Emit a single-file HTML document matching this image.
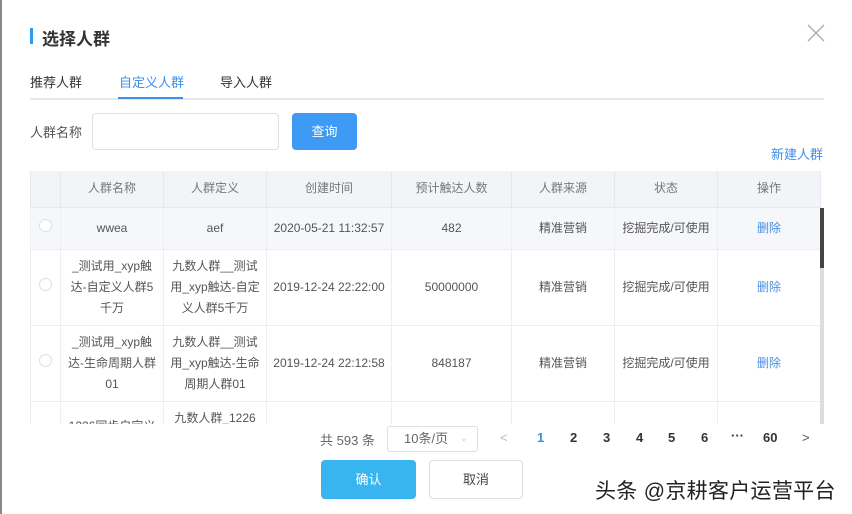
<!DOCTYPE html>
<html><head><meta charset="utf-8"><style>
*{margin:0;padding:0;box-sizing:border-box}
body{width:852px;height:514px;background:#fff;font-family:"Liberation Sans","Noto Sans CJK SC",sans-serif;position:relative;overflow:hidden;color:#333}
.a{position:absolute}
table{border-collapse:collapse;table-layout:fixed}
td{border:1px solid #ebeef5;border-top:none;text-align:center;font-size:12px;color:#555;line-height:21px;padding:0 6px}
.h td{background:#f2f4f8;color:#777;height:36px;border-color:#e6e8ee}
.r1 td{background:#f5f7fa;height:42px}
.rad{display:inline-block;width:13px;height:13px;border:1px solid #dcdfe6;border-radius:50%;background:#fff}
.del{color:#4a90e2}
</style></head><body>
<div class="a" style="left:0;top:0;width:2px;height:514px;background:#888"></div>
<div class="a" style="left:30px;top:28px;width:3px;height:16px;background:#2d9cf0"></div>
<div class="a" style="left:42px;top:25px;font-size:17px;font-weight:bold;color:#333">选择人群</div>
<svg class="a" style="left:806px;top:23px" width="20" height="20"><path d="M2 2L18 18M18 2L2 18" stroke="#aaa" stroke-width="1.3"/></svg>
<div class="a" style="left:30px;top:72px;font-size:13px;color:#333">推荐人群</div>
<div class="a" style="left:119px;top:72px;font-size:13px;color:#3d8fe8">自定义人群</div>
<div class="a" style="left:220px;top:72px;font-size:13px;color:#333">导入人群</div>
<div class="a" style="left:30px;top:98px;width:794px;height:2px;background:#e4e7ed"></div>
<div class="a" style="left:118px;top:97px;width:65px;height:2px;background:#3d8fe8"></div>
<div class="a" style="left:30px;top:122px;font-size:13px;color:#555">人群名称</div>
<div class="a" style="left:92px;top:113px;width:187px;height:37px;border:1px solid #dcdfe6;border-radius:4px"></div>
<div class="a" style="left:292px;top:113px;width:65px;height:37px;background:#3d9af5;border-radius:4px;color:#fff;font-size:13px;text-align:center;line-height:37px">查询</div>
<div class="a" style="left:771px;top:144px;font-size:13px;color:#3d8fe8">新建人群</div>
<div class="a" style="left:30px;top:171px;width:794px;height:253px;overflow:hidden">
<table style="width:790px">
<colgroup><col style="width:30px"><col style="width:103px"><col style="width:103px"><col style="width:125px"><col style="width:120px"><col style="width:103px"><col style="width:103px"><col style="width:103px"></colgroup>
<tr class="h"><td></td><td>人群名称</td><td>人群定义</td><td>创建时间</td><td>预计触达人数</td><td>人群来源</td><td>状态</td><td>操作</td></tr>
<tr class="r1"><td><span class="rad"></span></td><td>wwea</td><td>aef</td><td>2020-05-21 11:32:57</td><td>482</td><td>精准营销</td><td>挖掘完成/可使用</td><td class="del">删除</td></tr>
<tr style="height:76px"><td><span class="rad"></span></td><td>_测试用_xyp触达-自定义人群5千万</td><td>九数人群__测试用_xyp触达-自定义人群5千万</td><td>2019-12-24 22:22:00</td><td>50000000</td><td>精准营销</td><td>挖掘完成/可使用</td><td class="del">删除</td></tr>
<tr style="height:76px"><td><span class="rad"></span></td><td>_测试用_xyp触达-生命周期人群01</td><td>九数人群__测试用_xyp触达-生命周期人群01</td><td>2019-12-24 22:12:58</td><td>848187</td><td>精准营销</td><td>挖掘完成/可使用</td><td class="del">删除</td></tr>
<tr style="height:60px"><td></td><td style="vertical-align:top;padding-top:14px">1226同步自定义</td><td style="vertical-align:top;padding-top:6px">九数人群_1226</td><td></td><td></td><td></td><td></td><td></td></tr>
</table>
<div class="a" style="left:790px;top:37px;width:4px;height:216px;background:#ddd"></div>
<div class="a" style="left:790px;top:37px;width:4px;height:60px;background:#444"></div>
</div>
<div class="a" style="left:320px;top:430px;font-size:13px;color:#666">共 593 条</div>
<div class="a" style="left:387px;top:426px;width:91px;height:26px;border:1px solid #dcdfe6;border-radius:3px;font-size:13px;color:#666;line-height:24px;padding-left:16px">10条/页<span style="position:absolute;right:9px;color:#ccc;font-size:10px">&#8964;</span></div>
<div class="a" style="left:500px;top:430px;font-size:13px;color:#bbb">&lt;</div>
<div class="a" style="left:537px;top:430px;font-size:13px;color:#3d8fe8;font-weight:bold">1</div>
<div class="a" style="left:570px;top:430px;font-size:13px;color:#333;font-weight:bold">2</div>
<div class="a" style="left:603px;top:430px;font-size:13px;color:#333;font-weight:bold">3</div>
<div class="a" style="left:636px;top:430px;font-size:13px;color:#333;font-weight:bold">4</div>
<div class="a" style="left:668px;top:430px;font-size:13px;color:#333;font-weight:bold">5</div>
<div class="a" style="left:701px;top:430px;font-size:13px;color:#333;font-weight:bold">6</div>
<div class="a" style="left:731px;top:428px;font-size:13px;color:#333;font-weight:bold">···</div>
<div class="a" style="left:763px;top:430px;font-size:13px;color:#333;font-weight:bold">60</div>
<div class="a" style="left:802px;top:430px;font-size:13px;color:#555">&gt;</div>
<div class="a" style="left:321px;top:460px;width:95px;height:39px;background:#38b5f0;border-radius:4px;color:#fff;font-size:13px;text-align:center;line-height:39px">确认</div>
<div class="a" style="left:429px;top:460px;width:94px;height:39px;border:1px solid #dcdfe6;border-radius:4px;color:#444;font-size:13px;text-align:center;line-height:37px">取消</div>
<div class="a" style="left:595px;top:475px;font-size:21px;color:#222;letter-spacing:0.3px;white-space:nowrap;text-shadow:0 0 2px #fff,0 0 2px #fff">头条 @京耕客户运营平台</div>
</body></html>
